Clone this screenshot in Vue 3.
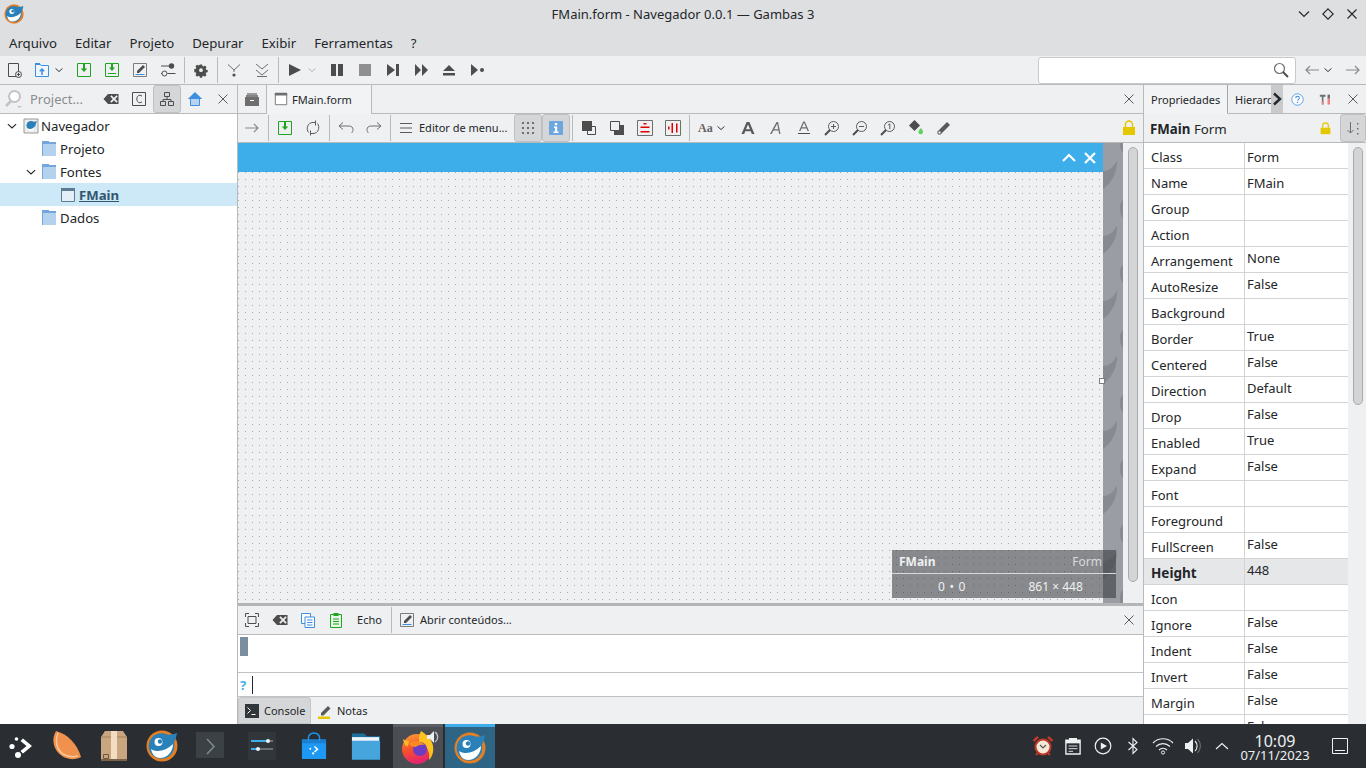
<script setup>
// Icons are 16x16 unless the caller changes the viewBox
const icons = {
  newdoc: '<path d="M2.500 1.500h10v13h-10z" fill="none" stroke="#4d4d4d"/><circle cx="12.500" cy="12.500" r="3" fill="#eff0f1" stroke="#4d4d4d"/><path d="M10.800 12.500h3.400M12.500 10.800v3.400" stroke="#4d4d4d"/>',
  open: '<path d="M1.500 14.500v-13h4l1.500 2h7.500v11z" fill="#eff6fc" stroke="#3d8fe0"/><path d="M1 1h5v2H1z" fill="#3d8fe0"/><path d="M8 13V7.500M5.800 9.300 8 7l2.200 2.300" fill="none" stroke="#3d8fe0" stroke-width="1.500"/>',
  save: '<path d="M1.500 1.500h13v13h-13z" fill="none" stroke="#1fa51f"/><path d="M8 2v5" stroke="#1fa51f" stroke-width="2"/><path d="M4.800 6.500h6.400L8 10z" fill="#1fa51f"/>',
  saveall: '<path d="M1.500 1.500h13v13h-13z" fill="none" stroke="#1fa51f"/><path d="M8 2v4" stroke="#1fa51f" stroke-width="2"/><path d="M5 5.500h6L8 9z" fill="#1fa51f"/><path d="M4 11.500h8" stroke="#1fa51f"/>',
  edit: '<path d="M1.500 1.500h13v13h-13z" fill="none" stroke="#7c7c7c"/><path d="M5 9l6-6 2 2-6 6H5z" fill="#4d4d4d"/><path d="M3.500 12.500h9" stroke="#3d8fe0"/>',
  sliders: '<circle cx="11.500" cy="4" r="2.700" fill="#4d4d4d"/><path d="M1 4h8M1 11.500h1M7.500 11.500h8" stroke="#4d4d4d"/><circle cx="4.500" cy="11.500" r="2.500" fill="none" stroke="#4d4d4d"/>',
  gear: '<path fill="#4d4d4d" fill-rule="evenodd" d="M6.600 1h2.800l.4 2 1.300.6 1.800-1.100 2 2-1.100 1.800.6 1.300 2 .4v2.800l-2 .4-.6 1.300 1.100 1.800-2 2-1.800-1.100-1.300.6-.4 2H6.600l-.4-2-1.300-.6-1.800 1.100-2-2 1.100-1.800-.6-1.300-2-.4V6.800l2-.4.6-1.300-1.100-1.800 2-2 1.800 1.100 1.300-.6zM8 5.800a2.400 2.400 0 1 0 0 4.800 2.400 2.400 0 0 0 0-4.800z" transform="translate(1.600 1.600) scale(.8)"/>',
  stepin: '<path d="M2 2.500 8 8l6-5.500" fill="none" stroke="#6e6e6e"/><path d="M8 8v2" stroke="#6e6e6e"/><circle cx="8" cy="13" r="1.600" fill="#4d4d4d"/>',
  stepall: '<path d="M2 2l6 5 6-5M2 8l6 5 6-5" fill="none" stroke="#6e6e6e"/><path d="M3 14.500h10" stroke="#6e6e6e"/>',
  play: '<path d="M2 2l12 6-12 6z" fill="#4d4d4d"/>',
  pause: '<path d="M2 2h5v12H2zM9 2h5v12H9z" fill="#4d4d4d"/>',
  stop: '<path d="M2 2h12v12H2z" fill="#8f8f8f"/>',
  step: '<path d="M2 2l8 6-8 6zM11 2h3v12h-3z" fill="#4d4d4d"/>',
  forward: '<path d="M2 2l6 6-6 6zM9 2l6 6-6 6z" fill="#4d4d4d"/>',
  eject: '<path d="M8 3l6 6H2zM2 11h12v2.500H2z" fill="#4d4d4d"/>',
  breakp: '<path d="M2 2l7 6-7 6z" fill="#4d4d4d"/><circle cx="13" cy="8" r="2" fill="#4d4d4d"/>',
  searchbig: '<circle cx="9.500" cy="7.500" r="5.500" fill="#fff" stroke="#c3c3c3" stroke-width="2"/><path d="M6 12l-5 5" stroke="#c3c3c3" stroke-width="2.500"/><path d="M12 17h5l-2.500 2z" fill="#c3c3c3"/>',
  clear: '<path fill="#4d4d4d" fill-rule="evenodd" d="M5 3h10.500v10H5L.5 8zM7.300 5.500 9.800 8l-2.500 2.500 1.200 1.200L11 9.200l2.500 2.500 1.200-1.200L12.200 8l2.500-2.500-1.200-1.200L11 6.800 8.500 4.300z"/>',
  classbox: '<path d="M1.500 1.500h13v13h-13z" fill="none" stroke="#4d4d4d"/><path d="M11 5.200c-.6-.6-1.300-.9-2.200-.9C7 4.300 5.800 5.800 5.800 8s1.200 3.700 3 3.700c.9 0 1.600-.3 2.200-.9" fill="none" stroke="#4d4d4d"/>',
  tree: '<path d="M5.500 1.500h5v4h-5zM1.500 10.500h5v4h-5zM9.500 10.500h5v4h-5z" fill="none" stroke="#4d4d4d"/><path d="M8 5.500v3M4 10.500v-2h8v2" fill="none" stroke="#4d4d4d"/>',
  home: '<path d="M3.500 8v6.500h9V8" fill="#b7d3f0" stroke="#3d8fe0"/><path d="M8 1 .8 8h14.400z" fill="#3d8fe0"/>',
  close: '<path d="M3.500 3.500l9 9M12.500 3.500l-9 9" stroke="#5a5a5a"/>',
  archive: '<path d="M1 6h14v9H1z" fill="#6e6e6e"/><path d="M3 2h10v2H3z" fill="#9a9a9a"/><path d="M2 4h12v2H2z" fill="#858585"/><path d="M6 9h4v1H6z" fill="#fff"/>',
  window: '<path d="M1.500 1.500h13v13h-13z" fill="#fff" stroke="#6e6e6e"/><path d="M1 1h14v3H1z" fill="#6e6e6e"/>',
  arrowr: '<path d="M1 8h13M10 4l4 4-4 4" fill="none" stroke="#8a8a8a" stroke-width="1.200"/>',
  arrowl: '<path d="M15 8H2M6 4 2 8l4 4" fill="none" stroke="#8a8a8a" stroke-width="1.200"/>',
  refresh: '<path d="M3.500 12.500C.8 8.800 2.500 2.500 8 2.500h2.500M10.500 .5v5" fill="none" stroke="#5a5a5a"/><path d="M12.500 3.500c2.700 3.700 1 10-4.500 10H5.500M5.500 10.500v5" fill="none" stroke="#5a5a5a"/>',
  undo: '<path d="M1 6h10c2.500 0 4 1.500 4 3.500 0 1.500-.5 2.500-1.500 3.500M5 2.500 1 6l4 3.500" fill="none" stroke="#6e6e6e"/>',
  redo: '<path d="M15 6H5C2.500 6 1 7.500 1 9.500c0 1.500.5 2.500 1.500 3.500M11 2.500 15 6l-4 3.500" fill="none" stroke="#6e6e6e"/>',
  menu: '<path d="M2 3.500h12M2 8h12M2 12.500h12" stroke="#5a5a5a"/>',
  grid: '<path d="M2 2h2v2H2zM7 2h2v2H7zM12 2h2v2h-2zM2 7h2v2H2zM7 7h2v2H7zM12 7h2v2h-2zM2 12h2v2H2zM7 12h2v2H7zM12 12h2v2h-2z" fill="#6e6e6e"/>',
  info: '<path d="M1 1h14v14H1z" fill="#6ea6e0"/><path d="M6.800 3h2.400v2.200H6.800zM6 6.500h3.200v5h1.300V13h-5v-1.500H7V8H6z" fill="#fff"/>',
  front: '<path d="M6.500 6.500h8v8h-8z" fill="none" stroke="#4d4d4d"/><path d="M1 1h10v10H1z" fill="#4d4d4d"/>',
  back: '<path d="M5 5h10v10H5z" fill="#4d4d4d"/><path d="M1.500 1.500h9v9h-9z" fill="#eff0f1" stroke="#4d4d4d"/>',
  halign: '<path d="M.5.500h15v15H.5z" fill="none" stroke="#6e6e6e"/><path d="M6.500 3h3v1.500h-3zM3.500 6.500h9V8h-9zM3.500 11h9v1.500h-9z" fill="#e00000"/>',
  valign: '<path d="M.5.500h15v15H.5z" fill="none" stroke="#6e6e6e"/><path d="M3 6.500h1.500v3H3zM6.500 3H8v10H6.500zM11 3.500h1.500v9H11z" fill="#e00000"/>',
  lock: '<path d="M2 7h12v8H2z" fill="#e5c700"/><path d="M4.500 7V4.500a3.500 3.500 0 0 1 7 0V7" fill="none" stroke="#e5c700" stroke-width="1.500"/>',
  upc: '<path d="M2 11l6-6 6 6" fill="none" stroke="#fff" stroke-width="2"/>',
  xwhite: '<path d="M3 3l10 10M13 3 3 13" fill="none" stroke="#fff" stroke-width="2.200"/>',
  fit: '<path d="M1.500 5V1.500H5M11 1.500h3.500V5M14.500 11v3.500H11M5 14.500H1.500V11" fill="none" stroke="#4d4d4d"/><path d="M4 4.500h8v7H4z" fill="none" stroke="#4d4d4d"/>',
  copy: '<path d="M1.500 1.500h9v10h-9z" fill="#fff" stroke="#3d8fe0"/><path d="M5 5h9.500v10.500H5z" fill="#fff" stroke="#3d8fe0"/><path d="M7 8h5.500M7 10.500h5.500M7 13h5.500" stroke="#3d8fe0"/>',
  paste: '<path d="M2.500 2.500h11v13h-11z" fill="#e8f5e8" stroke="#1fa51f"/><path d="M5.500 1h5v3h-5z" fill="#1fa51f"/><path d="M5 7h6M5 9.500h6M5 12h6" stroke="#1fa51f"/>',
  term: '<path d="M1 1h14v14H1z" fill="#31363b"/><path d="M3.500 4.500 6.500 7.500l-3 3" fill="none" stroke="#fff"/><path d="M7.500 11.500h4" stroke="#fff"/>',
  note: '<path d="M4 10l7-7 2.500 2.500-7 7H4z" fill="#5a5a5a"/><path d="M1 13.500h12V16H1z" fill="#e5c700"/>',
  sortd: '<path d="M5.500 2v11M2.500 10l3 3 3-3" fill="none" stroke="#6e6e6e"/><path d="M12 3h1.500v1.500H12zM12 8h1.500v1.500H12zM12 13h1.500v1.500H12z" fill="#6e6e6e"/>',
  help: '<circle cx="8" cy="8" r="7" fill="#fff" stroke="#3d8fe0"/><path d="M5.800 6.200c0-1.300 1-2.200 2.300-2.200s2.200.8 2.200 2c0 1.800-2.200 1.700-2.200 3.500" fill="none" stroke="#3d8fe0" stroke-width="1.300"/><path d="M7.300 10.800h1.500v1.500H7.300z" fill="#3d8fe0"/>',
  tools: '<path d="M1 2h7v2.500H5.500V14H3.500V4.500H1z" fill="#6e6e6e"/><path d="M10.500 2h3v5h-3z" fill="#6e6e6e"/><path d="M10.500 7h3v7h-3zM3.500 10h2v4h-2z" fill="#f08080"/>',
  smallchev: '<path d="M2.500 5.500 8 10.500l5.500-5" fill="none" stroke="#232629" stroke-width="1.500"/>',
  grey: '<path d="M2.500 5.500 8 10.500l5.500-5" fill="none" stroke="#a5a5a5" stroke-width="1.300"/>',
  fontb: '<path d="M1.500 14 6.600 2h2.800l5.100 12h-2.700l-1-2.700H5.200L4.200 14zM6 9.200h4L8 4.500z" fill="#5a5a5a"/>',
  fonti: '<path d="M2 14 8.500 2h1.600L12.500 14h-1.300l-.7-3.500H5.500L3.600 14zM6.200 9.200h4L9.200 3.800z" fill="#6e6e6e"/>',
  fontu: '<path d="M3 11 7.200 1.500h1.600L13 11h-1.500l-1-2.500h-5l-1 2.500zM6 7.200h4L8 2.800z" fill="#6e6e6e"/><path d="M2 13.500h12" stroke="#4d4d4d"/>',
  zoomin: '<circle cx="9.500" cy="6.500" r="5" fill="none" stroke="#5a5a5a"/><path d="M6 10 1 15" stroke="#4d4d4d" stroke-width="2"/><path d="M7 6.500h5M9.500 4v5" stroke="#5a5a5a"/>',
  zoomout: '<circle cx="9.500" cy="6.500" r="5" fill="none" stroke="#5a5a5a"/><path d="M6 10 1 15" stroke="#4d4d4d" stroke-width="2"/><path d="M7 6.500h5" stroke="#5a5a5a"/>',
  zoomone: '<circle cx="9.500" cy="6.500" r="5" fill="none" stroke="#5a5a5a"/><path d="M6 10 1 15" stroke="#4d4d4d" stroke-width="2"/><path d="M8.200 5 9.800 3.800v5.400" fill="none" stroke="#5a5a5a"/>',
  fill: '<path d="M1 5.500 6.500 0 12 5.500 6.500 11z" fill="#4d4d4d"/><path d="M13 8c1 1.500 2 2.700 2 4a2.300 2.300 0 0 1-4.600 0c0-1.300 1.300-2.500 2.600-4z" fill="#5fd35f"/>',
  pencil: '<path d="M3 10l8-8 3 3-8 8H3z" fill="#5a5a5a"/><path d="M2 11h3v3H2z" fill="#fff" stroke="#5a5a5a"/>',
  searchdark: '<circle cx="6.500" cy="6.500" r="5" fill="none" stroke="#6e6e6e" stroke-width="1.200"/><path d="M10 10l5 5" stroke="#4d4d4d" stroke-width="2"/>',
  // gambas shrimp, on a 32 grid
  gambas: '<circle cx="16" cy="16" r="15.500" fill="#e67e22"/><circle cx="15.500" cy="16" r="12.800" fill="#2a80b9"/><path d="M17 4c5 1 9 1 14-1-1 6-3 10-5 14z" fill="#2a80b9"/><path d="M5 19c6 4 15 2 22-5 0 8-6 14-13 14-5 0-8-4-9-9z" fill="#fff"/><circle cx="12.500" cy="12" r="4" fill="#fff"/><circle cx="14" cy="11.500" r="2.200" fill="#2a80b9"/>'
}

const mainTools = [
  { icon: 'newdoc' }, { icon: 'open', chev: 'smallchev' }, { icon: 'save' }, { icon: 'saveall' }, { icon: 'edit' }, { icon: 'sliders' },
  { sep: true }, { icon: 'gear' },
  { sep: true }, { icon: 'stepin' }, { icon: 'stepall' },
  { sep: true }, { icon: 'play', chev: 'grey' }, { icon: 'pause' }, { icon: 'stop' }, { icon: 'step' }, { icon: 'forward' }, { icon: 'eject' }, { icon: 'breakp' }
]

const formTools = [
  { icon: 'arrowr' }, { sep: true }, { icon: 'save' }, { icon: 'refresh' }, { sep: true }, { icon: 'undo' }, { icon: 'redo' }, { sep: true },
  { icon: 'menu', label: 'Editor de menu...' }, { icon: 'grid', on: true }, { icon: 'info', on: true }, { sep: true },
  { icon: 'front' }, { icon: 'back' }, { icon: 'halign' }, { icon: 'valign' }, { sep: true },
  { aa: true, chev: 'smallchev' }, { icon: 'fontb' }, { icon: 'fonti' }, { icon: 'fontu' }, { icon: 'zoomin' }, { icon: 'zoomout' }, { icon: 'zoomone' }, { icon: 'fill' }, { icon: 'pencil' }
]

const menus = ['Arquivo', 'Editar', 'Projeto', 'Depurar', 'Exibir', 'Ferramentas', '?']

const props = [
  ['Class', 'Form'], ['Name', 'FMain'], ['Group', ''], ['Action', ''],
  ['Arrangement', 'None', 1], ['AutoResize', 'False', 1], ['Background', ''], ['Border', 'True', 1],
  ['Centered', 'False', 1], ['Direction', 'Default', 1], ['Drop', 'False', 1], ['Enabled', 'True', 1],
  ['Expand', 'False', 1], ['Font', ''], ['Foreground', ''], ['FullScreen', 'False', 1],
  ['Height', '448', 1, 1], ['Icon', ''], ['Ignore', 'False', 1], ['Indent', 'False', 1],
  ['Invert', 'False', 1], ['Margin', 'False', 1], ['Mask', 'False', 1]
]
</script>

<template>
  <div class="desktop">
    <header class="titlebar">
      <svg class="title-logo" viewBox="0 0 32 32" v-html="icons.gambas"></svg>
      <span class="title-text">FMain.form - Navegador 0.0.1 — Gambas 3</span>
      <div class="win-btns">
        <svg viewBox="0 0 16 16"><path d="M3 5.500 8 10.500l5-5" fill="none" stroke="#232629" stroke-width="1.100" /></svg>
        <svg viewBox="0 0 16 16"><path d="M8 2.800 13.200 8 8 13.200 2.800 8z" fill="none" stroke="#232629" stroke-width="1.100" /></svg>
        <svg viewBox="0 0 16 16"><path d="M3.500 3.500l9 9M12.500 3.500l-9 9" stroke="#232629" stroke-width="1.100" /></svg>
      </div>
    </header>

    <nav class="menubar">
      <span v-for="m in menus" :key="m" class="menu-item">{{ m }}</span>
    </nav>

    <div class="toolbar top">
      <template v-for="(t, i) in mainTools" :key="i">
        <i v-if="t.sep" class="sep"></i>
        <span v-else class="tbtn" :class="{ wide: t.chev }">
          <svg class="ic" viewBox="0 0 16 16" v-html="icons[t.icon]"></svg>
          <svg v-if="t.chev" class="chev" viewBox="0 0 16 16" v-html="icons[t.chev]"></svg>
        </span>
      </template>
      <div class="searchbox">
        <svg class="ic" viewBox="0 0 16 16" v-html="icons.searchdark"></svg>
      </div>
      <span class="nav-arrows">
        <svg class="ic" viewBox="0 0 16 16" v-html="icons.arrowl"></svg>
        <svg class="chev" viewBox="0 0 16 16" v-html="icons.smallchev"></svg>
        <svg class="ic fwd" viewBox="0 0 16 16" v-html="icons.arrowr"></svg>
      </span>
    </div>

    <main class="workspace">
      <aside class="project">
        <div class="panel-head">
          <div class="filter">
            <svg class="filter-ic" viewBox="0 0 20 20" v-html="icons.searchbig"></svg>
            <span>Project...</span>
          </div>
          <span class="tbtn"><svg class="ic" viewBox="0 0 16 16" v-html="icons.clear"></svg></span>
          <span class="tbtn"><svg class="ic" viewBox="0 0 16 16" v-html="icons.classbox"></svg></span>
          <span class="tbtn on"><svg class="ic" viewBox="0 0 16 16" v-html="icons.tree"></svg></span>
          <span class="tbtn"><svg class="ic" viewBox="0 0 16 16" v-html="icons.home"></svg></span>
          <span class="tbtn"><svg class="ic" viewBox="0 0 16 16" v-html="icons.close"></svg></span>
        </div>
        <ul class="tree">
          <li class="node">
            <svg class="twist" viewBox="0 0 16 16" v-html="icons.smallchev"></svg>
            <svg class="proj-ic" viewBox="0 0 16 16">
              <path d="M1 1h14v14H1z" fill="#eee" stroke="#999" />
              <circle cx="8" cy="7.500" r="4.500" fill="#2a80b9" />
              <path d="M10 4l4-1-2 5z" fill="#2a80b9" />
              <path d="M4 10c3 2 6 1 8-2 0 3-2 5-4 5s-3-1-4-3z" fill="#fff" />
            </svg>
            <span>Navegador</span>
          </li>
          <li class="node lvl1">
            <span class="folder"></span><span>Projeto</span>
          </li>
          <li class="node lvl0b">
            <svg class="twist" viewBox="0 0 16 16" v-html="icons.smallchev"></svg>
            <span class="folder"></span><span>Fontes</span>
          </li>
          <li class="node lvl2 selected">
            <svg class="ic form-ic" viewBox="0 0 16 16">
              <path d="M1.500 1.500h13v13h-13z" fill="#e3eef6" stroke="#5d7b91" />
              <path d="M1 1h14v3H1z" fill="#5d7b91" />
            </svg>
            <b>FMain</b>
          </li>
          <li class="node lvl1">
            <span class="folder"></span><span>Dados</span>
          </li>
        </ul>
      </aside>

      <section class="center">
        <div class="panel-head tabs-head">
          <span class="tbtn"><svg class="ic" viewBox="0 0 16 16" v-html="icons.archive"></svg></span>
          <div class="doc-tab">
            <svg class="tab-ic" viewBox="0 0 16 16" v-html="icons.window"></svg>
            <span>FMain.form</span>
          </div>
          <span class="tbtn push"><svg class="ic" viewBox="0 0 16 16" v-html="icons.close"></svg></span>
        </div>

        <div class="toolbar form-tools">
          <template v-for="(t, i) in formTools" :key="i">
            <i v-if="t.sep" class="sep"></i>
            <span v-else-if="t.label" class="tbtn labelled">
              <svg class="ic" viewBox="0 0 16 16" v-html="icons[t.icon]"></svg>
              <span>{{ t.label }}</span>
            </span>
            <span v-else-if="t.aa" class="tbtn wide aa-btn">
              <b class="aa">Aa</b>
              <svg class="chev" viewBox="0 0 16 16" v-html="icons[t.chev]"></svg>
            </span>
            <span v-else class="tbtn" :class="{ on: t.on }">
              <svg class="ic" viewBox="0 0 16 16" v-html="icons[t.icon]"></svg>
            </span>
          </template>
          <span class="tbtn push"><svg class="ic" viewBox="0 0 16 16" v-html="icons.lock"></svg></span>
        </div>

        <div class="designer">
          <div class="form-col">
            <div class="form-title">
              <svg viewBox="0 0 16 16" v-html="icons.upc"></svg>
              <svg viewBox="0 0 16 16" v-html="icons.xwhite"></svg>
            </div>
            <div class="form-canvas"></div>
          </div>
          <div class="wallpaper">
            <svg width="20" height="460">
              <defs>
                <pattern id="leaf" width="20" height="65" patternUnits="userSpaceOnUse">
                  <path d="M14 17C15 28 9 40 0 46V28C6 28 11 24 14 17z" fill="#878b91" />
                  <path d="M20 57c-3 2-3 5-3 8h3zM20 0h-3c0 3 0 7 3 10z" fill="#878b91" />
                </pattern>
              </defs>
              <rect width="20" height="460" fill="url(#leaf)" />
            </svg>
          </div>
          <div class="vscroll"><i class="thumb form-thumb"></i></div>
          <i class="handle"></i>
          <div class="info-box">
            <div class="info-row first"><b>FMain</b><span>Form</span></div>
            <div class="info-row second"><span class="pos">0 • 0</span><span class="dim">861 × 448</span></div>
          </div>
        </div>

        <div class="toolbar console-tools">
          <span class="tbtn"><svg class="ic" viewBox="0 0 16 16" v-html="icons.fit"></svg></span>
          <span class="tbtn"><svg class="ic" viewBox="0 0 16 16" v-html="icons.clear"></svg></span>
          <span class="tbtn"><svg class="ic" viewBox="0 0 16 16" v-html="icons.copy"></svg></span>
          <span class="tbtn"><svg class="ic" viewBox="0 0 16 16" v-html="icons.paste"></svg></span>
          <span class="echo">Echo</span>
          <i class="sep"></i>
          <span class="tbtn labelled open-btn">
            <svg class="ic" viewBox="0 0 16 16" v-html="icons.edit"></svg>
            <span>Abrir conteúdos...</span>
          </span>
          <span class="tbtn push"><svg class="ic" viewBox="0 0 16 16" v-html="icons.close"></svg></span>
        </div>
        <div class="console-out"><i class="cursor-block"></i></div>
        <div class="console-in"><b>?</b><i class="caret"></i></div>
        <div class="bottom-tabs">
          <span class="btab on">
            <svg class="ic" viewBox="0 0 16 16" v-html="icons.term"></svg>Console
          </span>
          <span class="btab">
            <svg class="ic" viewBox="0 0 16 16" v-html="icons.note"></svg>Notas
          </span>
        </div>
      </section>

      <aside class="properties">
        <div class="panel-head prop-tabs">
          <div class="prop-tab active">Propriedades</div>
          <div class="prop-tab clipped">Hierarq</div>
          <span class="tab-more">
            <svg viewBox="0 0 12 16"><path d="M3 2.500 9 8l-6 5.500" fill="none" stroke="#232629" stroke-width="2.400" /></svg>
          </span>
          <span class="tbtn"><svg class="ic mini" viewBox="0 0 16 16" v-html="icons.help"></svg></span>
          <span class="tbtn"><svg class="ic mini" viewBox="0 0 16 16" v-html="icons.tools"></svg></span>
          <span class="tbtn"><svg class="ic" viewBox="0 0 16 16" v-html="icons.close"></svg></span>
        </div>
        <div class="toolbar prop-head">
          <span class="prop-name"><b>FMain</b> Form</span>
          <span class="tbtn push"><svg class="ic mini" viewBox="0 0 16 16" v-html="icons.lock"></svg></span>
          <span class="tbtn on sort"><svg class="ic" viewBox="0 0 16 16" v-html="icons.sortd"></svg></span>
        </div>
        <div class="prop-body">
          <div class="prop-table">
            <div v-for="p in props" :key="p[0]" class="prop-row" :class="{ strong: p[3] }">
              <span class="p-name">{{ p[0] }}</span>
              <span class="p-val" :class="{ raised: p[2] }">{{ p[1] }}</span>
            </div>
          </div>
          <div class="vscroll right"><i class="thumb prop-thumb"></i></div>
        </div>
      </aside>
    </main>

    <footer class="taskbar">
      <span class="kickoff">
        <svg viewBox="0 0 26 26" width="26" height="26">
          <path d="M15 5.500 24 13l-9 7.500-2.500-2.500 6-5-6-5z" fill="#fff" />
          <circle cx="4" cy="13.500" r="2.600" fill="#fff" />
          <circle cx="8.500" cy="6" r="1.800" fill="#fff" />
          <circle cx="10" cy="22" r="3" fill="#fff" />
        </svg>
      </span>
      <span class="task">
        <svg viewBox="0 0 32 32" width="32" height="32">
          <path d="M6 1c-5 8-3 19 6 25 6 4 14 4 19 1C27 13 17 4 6 1z" fill="#f0914e" />
          <path d="M8 3c-3 7-2 16 5 21 5 3 11 3 15 2" fill="none" stroke="#fbc89c" stroke-width="1.500" />
        </svg>
      </span>
      <span class="task">
        <svg viewBox="0 0 32 32" width="32" height="32">
          <path d="M3 7 7 1h18l4 6v24H3z" fill="#c9a680" />
          <path d="M3 7h26" stroke="#a58559" />
          <path d="M13 1h6v30h-6z" fill="#f2dcc2" />
          <path d="M3 29h26v2H3z" fill="#7a6248" />
          <path d="M5.500 24.500h5v4h-5z" fill="none" stroke="#6e5840" />
        </svg>
      </span>
      <span class="task">
        <svg viewBox="0 0 32 32" width="32" height="32" v-html="icons.gambas"></svg>
      </span>
      <span class="task">
        <svg viewBox="0 0 28 28" width="28" height="28">
          <path d="M0 0h28v28H0z" fill="#3b4144" />
          <path d="M0 26h28v2H0z" fill="#2a2e32" />
          <path d="M11 7l7 7.500-7 7.500" fill="none" stroke="#7f8c8d" stroke-width="1.500" />
        </svg>
      </span>
      <span class="task gap-s">
        <svg viewBox="0 0 28 28" width="28" height="28">
          <path d="M0 0h28v28H0z" fill="#31363b" />
          <path d="M3 9h22M3 17h22" stroke="#6b7075" stroke-width="2" />
          <path d="M3 9h17" stroke="#3daee9" stroke-width="2" />
          <path d="M3 17h7" stroke="#3daee9" stroke-width="2" />
          <circle cx="20" cy="9" r="2" fill="#eff0f1" />
          <circle cx="10" cy="17" r="2" fill="#eff0f1" />
        </svg>
      </span>
      <span class="task gap-s">
        <svg viewBox="0 0 28 30" width="26" height="30">
          <path d="M1 8h26v21H1z" fill="#1d99f3" />
          <path d="M1 8h26v4H1z" fill="#1a7fd0" />
          <path d="M8 10V6a6 5 0 0 1 12 0v4" fill="none" stroke="#1d99f3" stroke-width="1.500" />
          <path d="M15 15l4 3.500-4 3.500-1-1 2.500-2.500-2.500-2.500z" fill="#fff" />
          <circle cx="10" cy="18" r="1" fill="#fff" />
          <circle cx="13" cy="23" r="1.200" fill="#fff" />
        </svg>
      </span>
      <span class="task gap-s">
        <svg viewBox="0 0 32 28" width="30" height="27">
          <path d="M1 0h13l3 3h14v25H1z" fill="#1d6f9e" />
          <path d="M1 4h29v4H1z" fill="#eef5fa" />
          <path d="M1 8h30v20H1z" fill="#45a5dc" />
        </svg>
      </span>
      <span class="win-task firefox">
        <svg viewBox="0 0 42 36" width="42" height="36">
          <defs>
            <linearGradient id="fxOuter" x1="0" y1="0" x2="0.3" y2="1">
              <stop offset="0" stop-color="#ffa436" />
              <stop offset="0.55" stop-color="#f5502c" />
              <stop offset="1" stop-color="#e5266e" />
            </linearGradient>
          </defs>
          <circle cx="20" cy="19" r="15" fill="url(#fxOuter)" />
          <path d="M24 1c5 3 11 8 12 15 1 6-1 11-4 14 1-8-1-14-9-17-2-3-1-8 1-12z" fill="#ffc21f" />
          <path d="M6 9c2 2 4 1 6 2l-1 5c-2 1-4-2-5-7z" fill="#ffb825" />
          <circle cx="23" cy="19" r="7" fill="#6b3cc4" />
          <path d="M12 13c5-3 13-2 16 2-5-1-8 1-9 2-3 0-6-1-7-4z" fill="#f98a24" />
          <path d="M30 5h3l4-4v12l-4-4h-3z" fill="#eff0f1" />
          <path d="M38 2a6 6 0 0 1 0 10" fill="none" stroke="#c8c9cb" stroke-width="1.200" />
        </svg>
      </span>
      <span class="win-task gambas">
        <svg viewBox="0 0 32 32" width="32" height="32" v-html="icons.gambas"></svg>
      </span>

      <div class="tray">
        <span class="tray-ic">
          <svg viewBox="0 0 22 22" width="22" height="22">
            <circle cx="11" cy="12" r="7.500" fill="#f5ead8" stroke="#c0392b" stroke-width="2" />
            <path d="M1.500 6 6 1.800M20.500 6 16 1.800" stroke="#c0392b" stroke-width="2.500" />
            <path d="M4 20l2-2M18 20l-2-2" stroke="#c0392b" stroke-width="2" />
            <path d="M8 10l3 3 3-3" fill="none" stroke="#555" stroke-width="1.200" />
          </svg>
        </span>
        <span class="tray-ic">
          <svg viewBox="0 0 18 20" width="16" height="18">
            <path d="M1 3.500h16V19H1z" fill="none" stroke="#eff0f1" stroke-width="1.500" />
            <path d="M4.500 1h9v5h-9z" fill="#eff0f1" />
            <path d="M1 3.500h16V7H1z" fill="#eff0f1" />
            <path d="M4 10h10M4 13h10M4 16h5" stroke="#eff0f1" />
          </svg>
        </span>
        <span class="tray-ic">
          <svg viewBox="0 0 18 18" width="18" height="18">
            <circle cx="9" cy="9" r="7.800" fill="none" stroke="#eff0f1" stroke-width="1.200" />
            <path d="M6.800 5.500 13 9l-6.200 3.500z" fill="#eff0f1" />
          </svg>
        </span>
        <span class="tray-ic">
          <svg viewBox="0 0 12 18" width="12" height="18">
            <path d="M1.500 5 10 12.500 6 16.500V1.500l4 4L1.500 13" fill="none" stroke="#eff0f1" stroke-width="1.100" />
          </svg>
        </span>
        <span class="tray-ic">
          <svg viewBox="0 0 22 18" width="22" height="18">
            <path d="M1 6a14 14 0 0 1 20 0M4 9.500a10 10 0 0 1 14 0M7 13a5.500 5.500 0 0 1 8 0" fill="none" stroke="#eff0f1" stroke-width="1.100" />
            <circle cx="11" cy="15.500" r="1.600" fill="none" stroke="#eff0f1" />
          </svg>
        </span>
        <span class="tray-ic">
          <svg viewBox="0 0 18 18" width="18" height="18">
            <path d="M1 6h3l5-4.500v15L4 12H1z" fill="#eff0f1" />
            <path d="M11 4a7 7 0 0 1 0 10" fill="none" stroke="#eff0f1" stroke-width="1.100" />
            <path d="M13.500 2a10 10 0 0 1 0 14" fill="none" stroke="#6e7175" stroke-width="1.100" />
          </svg>
        </span>
        <span class="tray-ic narrow">
          <svg viewBox="0 0 14 8" width="14" height="8"><path d="M1 7l6-5.500L13 7" fill="none" stroke="#eff0f1" stroke-width="1.200" /></svg>
        </span>
        <div class="clock">
          <span class="time">10:09</span>
          <span class="date">07/11/2023</span>
        </div>
        <span class="show-desk">
          <svg viewBox="0 0 16 16" width="16" height="16">
            <path d="M.5.500h15v15H.5z" fill="none" stroke="#eff0f1" />
            <path d="M3 12.500h10" stroke="#eff0f1" />
          </svg>
        </span>
      </div>
    </footer>
  </div>
</template>

<style scoped>
.desktop {
  width: 1366px;
  height: 768px;
  display: flex;
  flex-direction: column;
  overflow: hidden;
  background: #eff0f1;
  color: #232629;
  font-family: "Noto Sans", sans-serif;
  font-size: 13px;
}

.titlebar {
  height: 28px;
  flex: none;
  position: relative;
  display: flex;
  align-items: center;
  justify-content: center;
  background: #dedfe1;
}
.title-logo {
  position: absolute;
  left: 4px;
  top: 4px;
  width: 20px;
  height: 20px;
}
.win-btns {
  position: absolute;
  right: 0;
  top: 6px;
  display: flex;
  gap: 8px;
  padding-right: 6px;
}
.win-btns svg {
  width: 16px;
  height: 16px;
}

.menubar {
  height: 28px;
  flex: none;
  display: flex;
  align-items: center;
  gap: 18px;
  padding: 2px 0 0 9px;
  box-sizing: border-box;
  background: #dedfe1;
  font-size: 13.2px;
}

.toolbar {
  height: 29px;
  flex: none;
  display: flex;
  align-items: center;
  background: #eff0f1;
  border-bottom: 1px solid #b9babc;
  box-sizing: border-box;
}

.tbtn {
  width: 28px;
  height: 28px;
  flex: none;
  display: flex;
  align-items: center;
  justify-content: center;
  box-sizing: border-box;
}
.tbtn.wide {
  width: 42px;
  justify-content: flex-start;
  padding-left: 6px;
}
.tbtn.on {
  background: #d5d6d8;
  border: 1px solid #bfc0c2;
  border-radius: 3px;
}
.tbtn.push {
  margin-left: auto;
}
.tbtn.labelled {
  width: 121px;
  justify-content: flex-start;
  padding: 0 0 2px 5px;
  gap: 5px;
  font-size: 11px;
}
.tbtn.labelled .ic {
  margin-top: 2px;
}
.ic {
  width: 16px;
  height: 16px;
  flex: none;
}
.ic.mini {
  width: 13px;
  height: 13px;
}
.chev {
  width: 10px;
  height: 10px;
  flex: none;
  margin-left: 4px;
}
.aa-btn {
  padding-left: 8px;
}
.aa {
  width: 14px;
  flex: none;
  font-family: "Liberation Serif", serif;
  font-size: 12px;
  color: #666;
}
.aa-btn .chev {
  margin-left: 4px;
}
.sep {
  width: 5px;
  height: 26px;
  flex: none;
  display: block;
}
.sep::after {
  content: "";
  display: block;
  width: 1px;
  height: 100%;
  margin-left: 2px;
  background: #b9babc;
}

.searchbox {
  width: 258px;
  height: 27px;
  box-sizing: border-box;
  margin-left: auto;
  background: #fff;
  border: 1px solid #c8c9cb;
  border-radius: 3px;
  display: flex;
  align-items: center;
  justify-content: flex-end;
  padding-right: 6px;
}
.nav-arrows {
  width: 70px;
  flex: none;
  display: flex;
  align-items: center;
  padding-left: 8px;
  box-sizing: border-box;
}
.nav-arrows .chev {
  margin-left: 3px;
}
.nav-arrows .fwd {
  margin-left: 12px;
}

.workspace {
  height: 639px;
  flex: none;
  display: flex;
  overflow: hidden;
}

.project {
  width: 238px;
  flex: none;
  box-sizing: border-box;
  border-right: 1px solid #b9babc;
  background: #fff;
  overflow: hidden;
}
.panel-head {
  height: 29px;
  display: flex;
  align-items: center;
  background: #eff0f1;
  border-bottom: 1px solid #b9babc;
  box-sizing: border-box;
}
.filter {
  width: 97px;
  flex: none;
  display: flex;
  align-items: center;
  gap: 5px;
  padding-left: 5px;
  box-sizing: border-box;
  color: #8a8c8e;
}
.filter-ic {
  width: 20px;
  height: 20px;
  flex: none;
}

.tree {
  list-style: none;
  margin: 0;
  padding: 0;
  font-size: 13.2px;
}
.node {
  height: 23px;
  display: flex;
  align-items: center;
  padding-left: 6px;
}
.twist {
  width: 12px;
  height: 12px;
  flex: none;
}
.proj-ic {
  width: 16px;
  height: 16px;
  margin: 0 2px 0 5px;
  flex: none;
}
.lvl1 {
  padding-left: 42px;
}
.lvl0b {
  padding-left: 25px;
}
.lvl0b .twist {
  margin-right: 5px;
}
.lvl2 {
  padding-left: 60px;
}
.selected {
  background: #cde8f7;
  color: #31566f;
}
.selected b {
  text-decoration: underline;
}
.form-ic {
  margin-right: 3px;
}
.folder {
  width: 14px;
  height: 14px;
  margin-right: 4px;
  box-sizing: border-box;
  flex: none;
  background: #b4d1ee;
  border-top: 2px solid #73a6dc;
  border-left: 1px solid #73a6dc;
  position: relative;
}
.folder::before {
  content: "";
  position: absolute;
  left: -1px;
  top: -3px;
  width: 7px;
  height: 2px;
  background: #73a6dc;
}

.center {
  width: 906px;
  flex: none;
  box-sizing: border-box;
  border-right: 1px solid #b9babc;
  display: flex;
  flex-direction: column;
}
.doc-tab {
  width: 106px;
  height: 29px;
  flex: none;
  display: flex;
  align-items: center;
  gap: 4px;
  padding-left: 7px;
  box-sizing: border-box;
  font-size: 11px;
  border-left: 1px solid #b9babc;
  border-right: 1px solid #b9babc;
  background: #f2f3f4;
}
.tab-ic {
  width: 14px;
  height: 14px;
  flex: none;
}

.designer {
  height: 460px;
  flex: none;
  display: flex;
  position: relative;
}
.form-col {
  width: 865px;
  flex: none;
  display: flex;
  flex-direction: column;
}
.form-title {
  height: 29px;
  flex: none;
  display: flex;
  align-items: center;
  justify-content: flex-end;
  gap: 5px;
  padding-right: 5px;
  background: #3daee9;
}
.form-title svg {
  width: 16px;
  height: 16px;
}
.form-canvas {
  flex: 1;
  background-color: #eff0f1;
  background-image: radial-gradient(circle at 0.5px 0.5px, #a9aaac 0.5px, transparent 0.6px);
  background-size: 7px 7px;
}
.wallpaper {
  width: 20px;
  flex: none;
  background: #9a9ea4;
  overflow: hidden;
}
.wallpaper svg {
  display: block;
}
.vscroll {
  width: 20px;
  flex: none;
  position: relative;
  background: #eff0f1;
}
.thumb {
  display: block;
  position: absolute;
  left: 5px;
  top: 4px;
  width: 10px;
  box-sizing: border-box;
  background: #d3d4d6;
  border: 1px solid #a9aaac;
  border-radius: 5px;
}
.form-thumb {
  height: 435px;
}
.handle {
  position: absolute;
  left: 861px;
  top: 235px;
  width: 6px;
  height: 6px;
  box-sizing: border-box;
  background: #fff;
  border: 1px solid #7c7e80;
}
.info-box {
  position: absolute;
  left: 654px;
  top: 407px;
  width: 224px;
  height: 48px;
  background: rgba(50, 52, 56, 0.55);
  color: #eff0f1;
  font-size: 12px;
}
.info-row {
  height: 24px;
  display: flex;
  align-items: center;
  box-sizing: border-box;
  padding: 0 14px 0 7px;
}
.info-row.first {
  justify-content: space-between;
  border-bottom: 1px solid #d8d9db;
}
.info-row.first span {
  color: #d8d9db;
}
.pos {
  margin-left: 39px;
  word-spacing: 1.500px;
}
.dim {
  margin-left: 63px;
}

.console-tools {
  border-top: 3px solid #b4b5b7;
  height: 32px;
}
.echo {
  width: 39px;
  flex: none;
  padding-bottom: 2px;
  text-align: center;
  font-size: 11px;
}
.open-btn {
  width: 130px;
  padding-left: 6px;
}
.console-out {
  height: 38px;
  flex: none;
  box-sizing: border-box;
  background: #fff;
  border-bottom: 1px solid #c1c2c4;
  padding: 2px 0 0 2px;
}
.cursor-block {
  display: block;
  width: 8px;
  height: 19px;
  background: #7b8ea0;
}
.console-in {
  height: 24px;
  flex: none;
  box-sizing: border-box;
  background: #fff;
  border-bottom: 1px solid #c1c2c4;
  display: flex;
  align-items: center;
  padding-left: 2px;
}
.console-in b {
  width: 12px;
  font-size: 13px;
  color: #3daee9;
}
.caret {
  display: block;
  width: 1px;
  height: 18px;
  background: #232629;
}
.bottom-tabs {
  flex: 1;
  display: flex;
  align-items: stretch;
  font-size: 11px;
  min-height: 0;
}
.btab {
  display: flex;
  align-items: center;
  gap: 4px;
  padding: 0 7px 0 6px;
}
.btab.on {
  background: #d5d6d8;
  border-radius: 3px 3px 0 0;
  border: 1px solid #c5c6c8;
  box-sizing: border-box;
  width: 73px;
  padding: 0 0 0 5px;
}

.properties {
  flex: 1;
  min-width: 0;
  display: flex;
  flex-direction: column;
}
.prop-tab {
  height: 29px;
  line-height: 29px;
  flex: none;
  font-size: 11px;
  box-sizing: border-box;
}
.prop-tab.active {
  width: 84px;
  padding-left: 7px;
  border-right: 1px solid #a5a6a8;
  background: #f2f3f4;
  border-bottom: 1px solid #f2f3f4;
}
.prop-tab.clipped {
  width: 43px;
  padding-left: 7px;
  overflow: hidden;
  white-space: nowrap;
}
.tab-more {
  width: 12px;
  height: 28px;
  flex: none;
  background: #c8cacc;
  display: flex;
  align-items: center;
}
.tab-more svg {
  width: 12px;
  height: 16px;
}
.prop-name {
  padding: 1px 0 0 6px;
  font-size: 13.300px;
}
.prop-head .sort {
  width: 26px;
}
.prop-head .push {
  margin-right: 1px;
}
.prop-body {
  flex: 1;
  min-height: 0;
  display: flex;
  overflow: hidden;
}
.prop-table {
  width: 204px;
  flex: none;
  background: #fff;
}
.prop-row {
  height: 26px;
  display: flex;
  box-sizing: border-box;
  border-bottom: 1px solid #d2d3d5;
}
.p-name {
  width: 101px;
  flex: none;
  box-sizing: border-box;
  padding: 3px 0 0 7px;
  line-height: 23px;
  border-right: 1px solid #d2d3d5;
}
.p-val {
  padding: 3px 0 0 2px;
  line-height: 23px;
}
.p-val.raised {
  padding-top: 1px;
  line-height: 20px;
}
.strong {
  background: #e6e7e9;
}
.strong .p-name {
  font-weight: 700;
  font-size: 13.500px;
  padding-top: 3px;
}
.vscroll.right {
  width: 18px;
}
.prop-thumb {
  height: 258px;
}

.taskbar {
  height: 44px;
  flex: none;
  display: flex;
  align-items: center;
  background: #2a2e32;
}
.kickoff {
  width: 42px;
  height: 44px;
  flex: none;
  display: flex;
  align-items: center;
  justify-content: center;
}
.task {
  width: 48px;
  height: 44px;
  flex: none;
  display: flex;
  align-items: center;
  justify-content: center;
}
.gap-s {
  margin-left: 4px;
}
.win-task {
  width: 50px;
  height: 44px;
  flex: none;
  display: flex;
  align-items: center;
  justify-content: center;
  box-sizing: border-box;
}
.firefox {
  margin-left: 3px;
  background: #4a4d52;
  border-top: 3px solid #5a5d62;
  overflow: hidden;
}
.gambas {
  margin-left: 2px;
  background: #2e6584;
  border-top: 3px solid #3daee9;
}
.tray {
  margin-left: auto;
  display: flex;
  align-items: center;
  height: 44px;
}
.tray-ic {
  width: 30px;
  flex: none;
  display: flex;
  justify-content: center;
  align-items: center;
}
.tray-ic.narrow {
  width: 28px;
}
.clock {
  width: 78px;
  display: flex;
  flex-direction: column;
  align-items: center;
  padding-top: 3px;
  color: #eff0f1;
}
.time {
  font-size: 16px;
  line-height: 15px;
}
.date {
  font-size: 13px;
  line-height: 13px;
}
.show-desk {
  width: 52px;
  display: flex;
  justify-content: center;
}
</style>

<style>
html, body {
  margin: 0;
  padding: 0;
}
</style>
